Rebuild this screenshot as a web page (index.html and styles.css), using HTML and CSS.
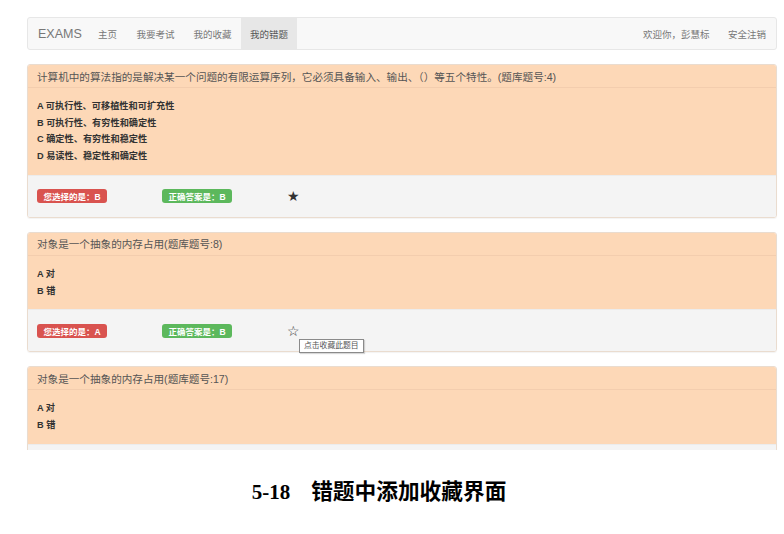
FILE: index.html
```html
<!DOCTYPE html>
<html lang="zh">
<head>
<meta charset="utf-8">
<link rel="stylesheet" href="styles.css">
</head>
<body>
<div class="shot">
  <nav class="navbar">
    <div class="nav-left">
      <span class="brand">EXAMS</span>
      <span class="nav-item">主页</span>
      <span class="nav-item">我要考试</span>
      <span class="nav-item">我的收藏</span>
      <span class="nav-item active">我的错题</span>
    </div>
    <div class="nav-right">
      <span class="nav-item">欢迎你，彭慧标</span>
      <span class="nav-item">安全注销</span>
    </div>
  </nav>

  <div class="panel">
    <div class="panel-heading">计算机中的算法指的是解决某一个问题的有限运算序列，它必须具备输入、输出、（）等五个特性。(题库题号:4)</div>
    <div class="panel-body">
      <div class="opt">A 可执行性、可移植性和可扩充性</div>
      <div class="opt">B 可执行性、有穷性和确定性</div>
      <div class="opt">C 确定性、有穷性和稳定性</div>
      <div class="opt">D 易读性、稳定性和确定性</div>
    </div>
    <div class="panel-footer">
      <span class="label red">您选择的是：B</span>
      <span class="label green">正确答案是：B</span>
      <span class="star">★</span>
    </div>
  </div>

  <div class="panel">
    <div class="panel-heading">对象是一个抽象的内存占用(题库题号:8)</div>
    <div class="panel-body">
      <div class="opt">A 对</div>
      <div class="opt">B 错</div>
    </div>
    <div class="panel-footer">
      <span class="label red">您选择的是：A</span>
      <span class="label green">正确答案是：B</span>
      <span class="star tip-anchor">☆<span class="tooltip">点击收藏此题目</span></span>
    </div>
  </div>

  <div class="panel">
    <div class="panel-heading">对象是一个抽象的内存占用(题库题号:17)</div>
    <div class="panel-body">
      <div class="opt">A 对</div>
      <div class="opt">B 错</div>
    </div>
    <div class="panel-footer"></div>
  </div>
</div>
<div class="caption"><span class="num">5-18</span><span class="cap-text">错题中添加收藏界面</span></div>
</body>
</html>
```

FILE: styles.css
```css
html, body {
  margin: 0;
  padding: 0;
  background: #ffffff;
}
body {
  font-family: "Liberation Sans", "Noto Sans CJK SC", sans-serif;
  color: #333;
}
.shot {
  height: 450px;
  overflow: hidden;
  padding: 17px 7px 0 27px;
  box-sizing: border-box;
}
.navbar {
  display: flex;
  justify-content: space-between;
  align-items: stretch;
  height: 33px;
  box-sizing: border-box;
  background: #f8f8f8;
  border: 1px solid #e7e7e7;
  border-radius: 3px;
  margin-bottom: 14px;
}
.nav-left, .nav-right {
  display: flex;
  align-items: stretch;
}
.brand {
  display: flex;
  align-items: center;
  padding: 0 10px 0 10px;
  width: 40px;
  font-size: 12.5px;
  color: #777;
}
.nav-item {
  display: flex;
  align-items: center;
  padding: 0 9.5px;
  font-size: 9.5px;
  color: #777;
}
.nav-left .brand + .nav-item { padding: 0 10px 0 10px; }
.nav-item.active {
  background: #e7e7e7;
  color: #555;
  padding: 0 9px;
}
.nav-right .nav-item:first-child { padding-right: 9px; }
.nav-right .nav-item:last-child { padding-right: 10px; }
.panel {
  border: 1px solid #eadccf;
  border-radius: 3px;
  margin-bottom: 14px;
  box-shadow: 0 1px 1px rgba(0,0,0,0.05);
}
.panel-heading {
  background: #fdd8b7;
  border-bottom: 1px solid #f3cdae;
  border-radius: 2px 2px 0 0;
  height: 22px;
  display: flex;
  align-items: center;
  padding: 0 9px;
  font-size: 10.6px;
  color: #555;
  white-space: nowrap;
}
.panel-body {
  background: #fdd8b7;
  padding: 10px 9px;
}
.opt {
  font-size: 9.2px;
  font-weight: bold;
  line-height: 16.7px;
  color: #333;
}
.panel-footer {
  background: #f4f4f4;
  border-top: 1px solid #ececec;
  border-radius: 0 0 2px 2px;
  height: 41px;
  display: flex;
  align-items: center;
  padding: 0 9px;
}
.label {
  display: inline-flex;
  align-items: center;
  justify-content: center;
  width: 70px;
  height: 14px;
  box-sizing: border-box;
  border-radius: 3px;
  color: #fff;
  font-size: 8.5px;
  font-weight: bold;
}
.label.red {
  background: #d9534f;
  margin-right: 55px;
}
.label.green {
  background: #5cb85c;
  margin-right: 55px;
}
.star {
  font-family: "DejaVu Sans", sans-serif;
  font-size: 14px;
  color: #333;
  line-height: 14px;
}
.tip-anchor {
  position: relative;
}
.tooltip {
  position: absolute;
  z-index: 5;
  left: 12px;
  top: 15px;
  white-space: nowrap;
  background: #fff;
  border: 1px solid #8a8a8a;
  font-family: "Liberation Sans", "Noto Sans CJK SC", sans-serif;
  font-size: 7.8px;
  line-height: 12px;
  padding: 0 4px;
  color: #555;
  box-shadow: 1px 1px 1px rgba(0,0,0,0.15);
}
.caption {
  margin-top: 24px;
  display: flex;
  justify-content: center;
  align-items: baseline;
  font-weight: bold;
  color: #000;
  padding-right: 26px;
}
.num {
  font-family: "Liberation Serif", serif;
  font-size: 21px;
  margin-right: 21px;
}
.cap-text {
  font-family: "Noto Sans CJK SC", sans-serif;
  font-size: 21.7px;
}
```
